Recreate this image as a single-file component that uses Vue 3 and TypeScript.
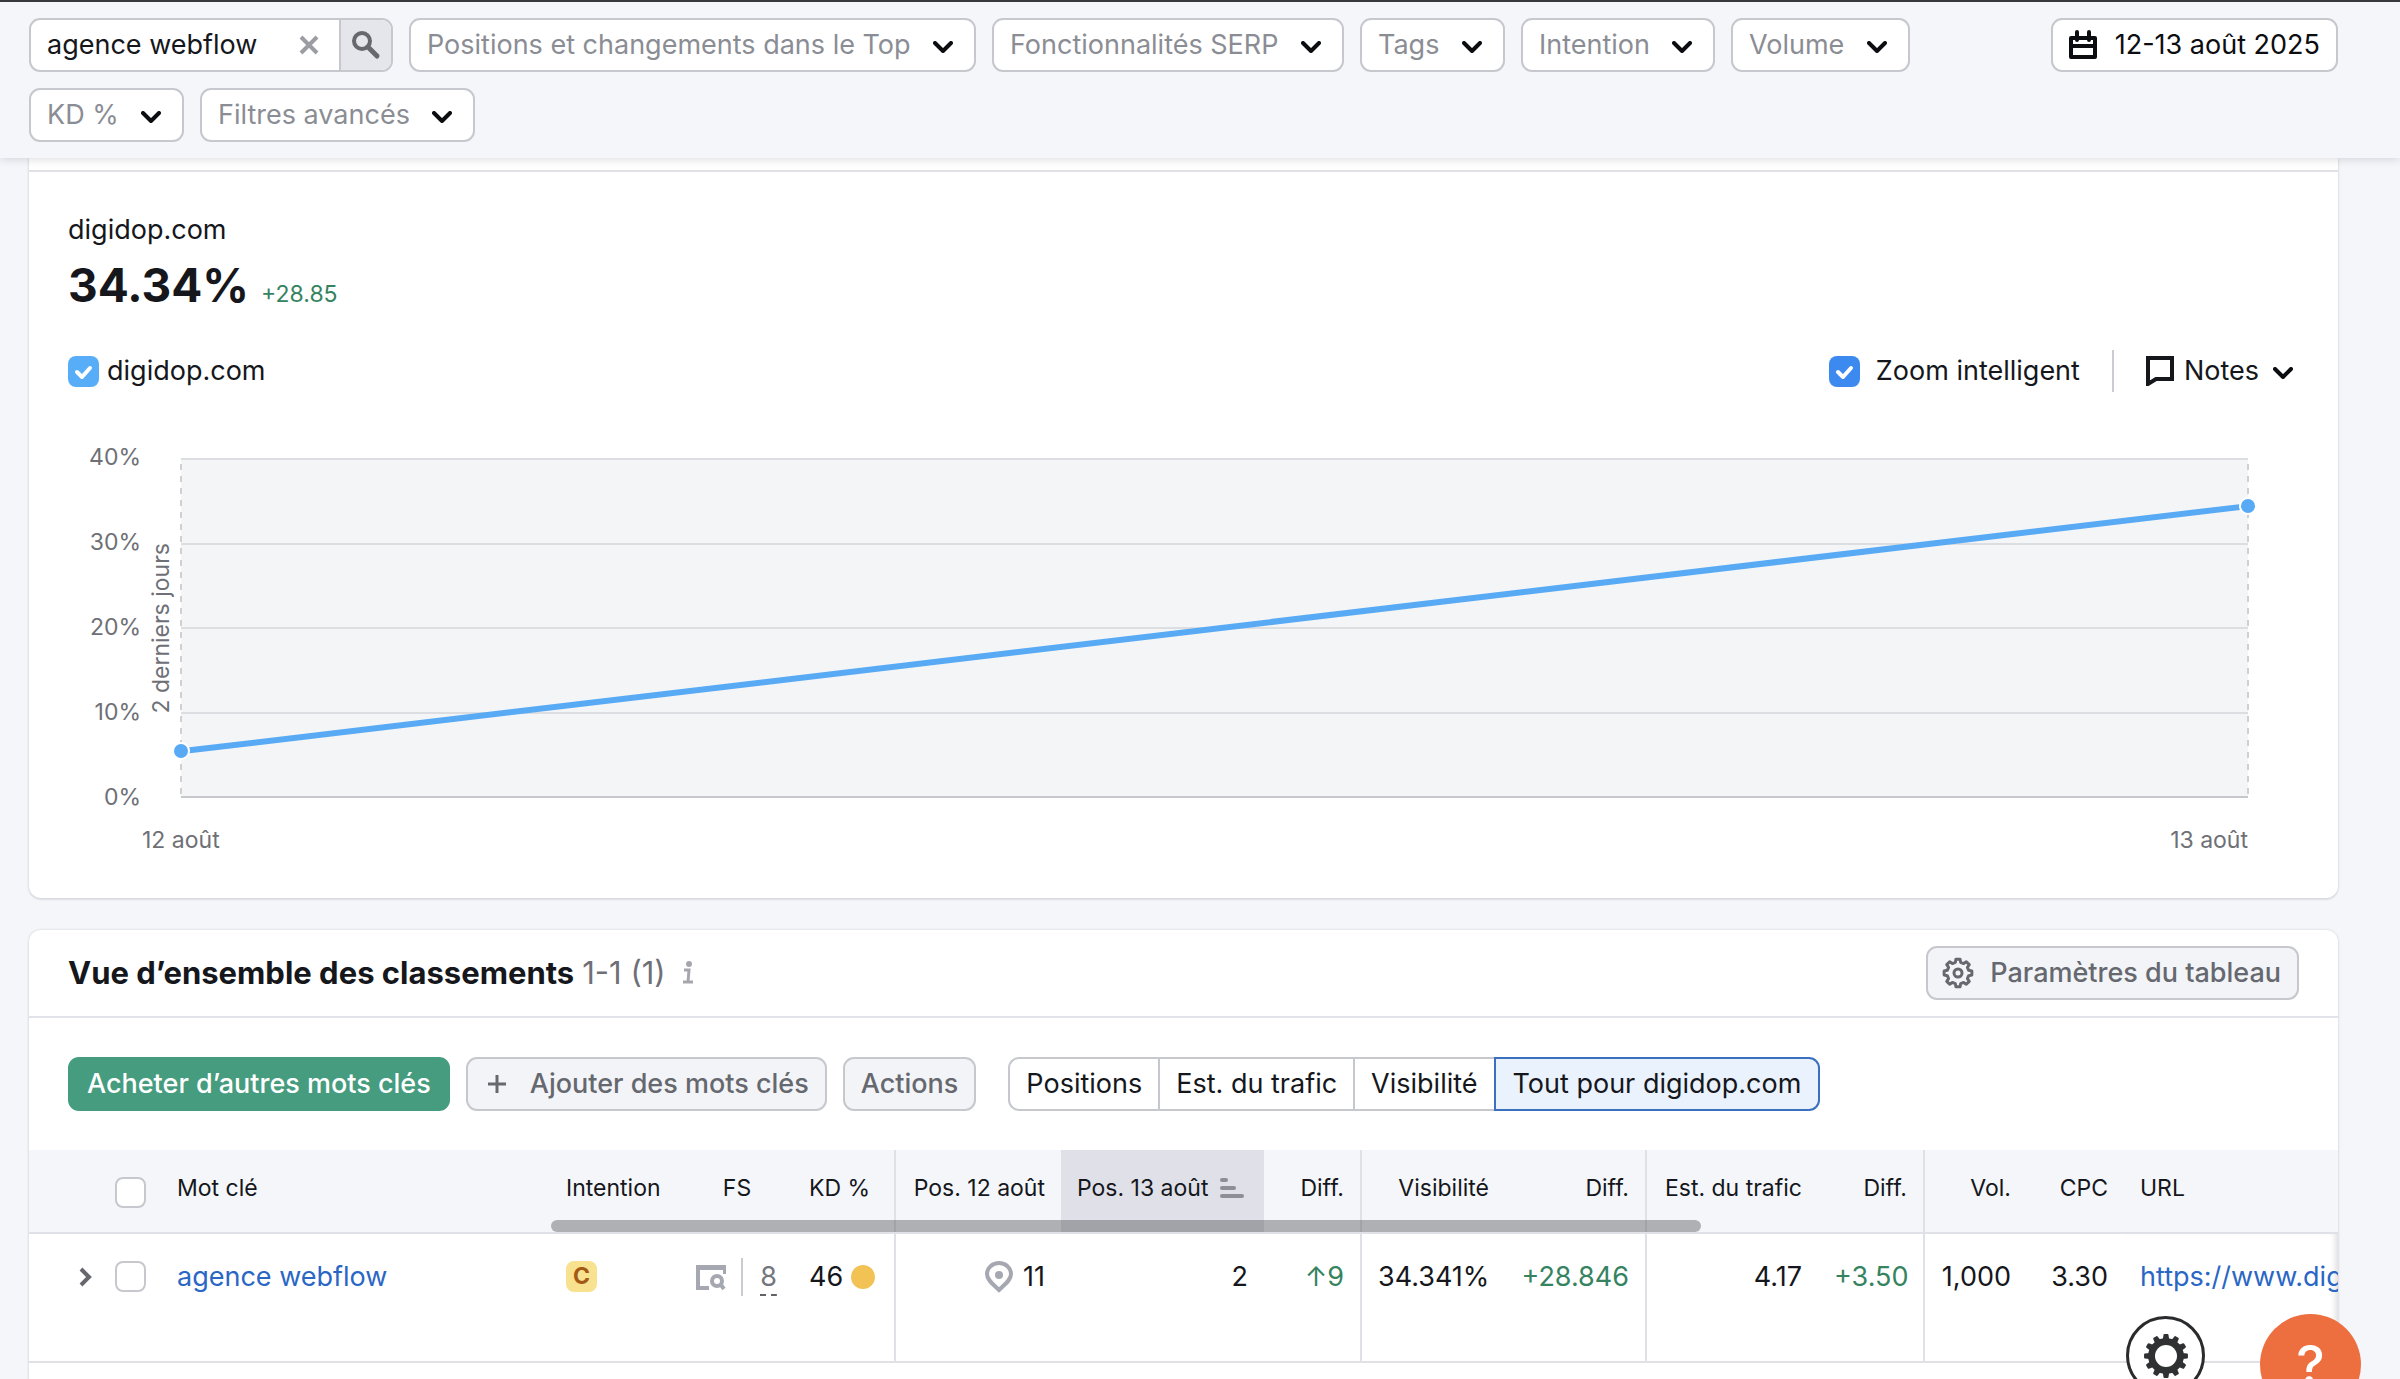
<script setup lang="ts">
import { ref } from 'vue'

interface Point {
  date: string
  value: number
}

interface Filter {
  id: string
  label: string
}

const query = ref('agence webflow')
const view = ref('Tout pour digidop.com')

const primaryFilters: Filter[] = [
  { id: 'top', label: 'Positions et changements dans le Top' },
  { id: 'serp', label: 'Fonctionnalités SERP' },
  { id: 'tags', label: 'Tags' },
  { id: 'intent', label: 'Intention' },
  { id: 'volume', label: 'Volume' },
]
const secondaryFilters: Filter[] = [
  { id: 'kd', label: 'KD %' },
  { id: 'advanced', label: 'Filtres avancés' },
]
const views = ['Positions', 'Est. du trafic', 'Visibilité', 'Tout pour digidop.com']

const ticks = [40, 30, 20, 10, 0]
const points: Point[] = [
  { date: '12 août', value: 5.49 },
  { date: '13 août', value: 34.34 },
]
const fromTop = (value: number): number => 100 - (value / 40) * 100
const line = points.map((p, i) => `${i * 100},${fromTop(p.value)}`).join(' ')

// Outline of a cog: each tooth is two outer points followed by two inner ones.
function cog(teeth: number, outer: number, inner: number, tip: number, root: number): string {
  const step = (Math.PI * 2) / teeth
  const out: string[] = []
  for (let i = 0; i < teeth; i++) {
    const a = i * step - Math.PI / 2
    const corners: [number, number][] = [
      [outer, a - step * tip],
      [outer, a + step * tip],
      [inner, a + step * root],
      [inner, a + step * (1 - root)],
    ]
    for (const [r, t] of corners) {
      out.push(`${(r * Math.cos(t)).toFixed(2)} ${(r * Math.sin(t)).toFixed(2)}`)
    }
  }
  return `M${out.join('L')}Z`
}
const settingsCog = cog(8, 14, 11, 0.19, 0.31)
const floatingCog = cog(12, 21, 17, 0.14, 0.24)
</script>

<template>
  <div class="page">
    <header class="filters">
      <div class="filter-row">
        <form class="search" @submit.prevent>
          <input v-model="query" class="search-input" type="text" aria-label="Mot clé" />
          <button class="clear" type="button" aria-label="Effacer" @click="query = ''">
            <svg width="20" height="20" viewBox="0 0 20 20"><path d="M2 2L18 18M18 2L2 18" /></svg>
          </button>
          <button class="search-go" type="submit" aria-label="Rechercher">
            <svg width="30" height="30" viewBox="0 0 30 30">
              <circle cx="11" cy="11" r="8" />
              <path d="M17 17L26 26" />
            </svg>
          </button>
        </form>
        <span v-for="f in primaryFilters" :key="f.id" class="select">
          <select :aria-label="f.label"><option>{{ f.label }}</option></select>
          <svg class="chevron" width="20" height="12" viewBox="0 0 20 12"><path d="M2 2L10 10L18 2" /></svg>
        </span>
        <button class="control date" type="button">
          <svg width="28" height="30" viewBox="0 0 28 30">
            <path d="M2 8H26V27H2ZM2 16H26M8 2V10M20 2V10" />
          </svg>
          12-13 août 2025
        </button>
      </div>
      <div class="filter-row">
        <span v-for="f in secondaryFilters" :key="f.id" class="select">
          <select :aria-label="f.label"><option>{{ f.label }}</option></select>
          <svg class="chevron" width="20" height="12" viewBox="0 0 20 12"><path d="M2 2L10 10L18 2" /></svg>
        </span>
      </div>
    </header>

    <main class="content">
      <section class="card visibility">
        <div class="tab-edge"></div>
        <div class="visibility-body">
          <div class="domain">digidop.com</div>
          <div class="score">
            <strong>34.34%</strong>
            <span class="delta">+28.85</span>
          </div>
          <div class="chart-controls">
            <label class="legend"><input class="box light" type="checkbox" checked />digidop.com</label>
            <label class="zoom"><input class="box" type="checkbox" checked />Zoom intelligent</label>
            <button class="notes" type="button">
              <svg width="28" height="30" viewBox="0 0 28 30"><path d="M2 2H26V23H10L2 28Z" /></svg>
              <span>Notes</span>
              <svg class="chevron-inline" width="20" height="12" viewBox="0 0 20 12"><path d="M2 2L10 10L18 2" /></svg>
            </button>
          </div>
          <div class="chart">
            <div class="y-axis"><span v-for="t in ticks" :key="t">{{ t }}%</span></div>
            <div class="range"><span>2 derniers jours</span></div>
            <div class="plot">
              <div class="grid"><i v-for="n in 4" :key="n"></i></div>
              <svg class="series" viewBox="0 0 100 100" preserveAspectRatio="none">
                <polyline :points="line" />
              </svg>
              <span
                v-for="(p, i) in points"
                :key="p.date"
                class="dot"
                :style="{ left: i * 100 + '%', top: fromTop(p.value) + '%' }"
              ></span>
            </div>
          </div>
          <div class="x-axis"><span v-for="p in points" :key="p.date">{{ p.date }}</span></div>
        </div>
      </section>

      <section class="card rankings">
        <div class="rankings-head">
          <h2>Vue d’ensemble des classements</h2>
          <span class="range-count">1-1 (1)</span>
          <svg class="info" width="12" height="24" viewBox="0 0 12 24">
            <circle cx="7" cy="3" r="2" />
            <path d="M2 9H7L6 21M1 21H11" />
          </svg>
          <button class="control gray settings" type="button">
            <svg width="32" height="32" viewBox="-16 -16 32 32">
              <path :d="settingsCog" />
              <circle r="4" />
            </svg>
            Paramètres du tableau
          </button>
        </div>

        <div class="toolbar">
          <button class="control buy" type="button">Acheter d’autres mots clés</button>
          <button class="control gray add" type="button">
            <svg width="20" height="20" viewBox="0 0 20 20"><path d="M10 1V19M1 10H19" /></svg>
            Ajouter des mots clés
          </button>
          <button class="control gray" type="button">Actions</button>
          <div class="segments">
            <button
              v-for="v in views"
              :key="v"
              type="button"
              :class="{ active: v === view }"
              @click="view = v"
            >{{ v }}</button>
          </div>
        </div>

        <div class="table-wrap">
          <table>
            <colgroup>
              <col class="w-expand" /><col class="w-check" /><col class="w-key" /><col class="w-intent" />
              <col class="w-fs" /><col class="w-kd" /><col class="w-pos" /><col class="w-pos-sorted" />
              <col class="w-diff" /><col class="w-vis" /><col class="w-vis-diff" /><col class="w-traffic" />
              <col class="w-traffic-diff" /><col class="w-vol" /><col class="w-cpc" /><col />
            </colgroup>
            <thead>
              <tr>
                <th></th>
                <th class="check"><input class="box" type="checkbox" aria-label="Tout sélectionner" /></th>
                <th>Mot clé</th>
                <th>Intention</th>
                <th class="mid">FS</th>
                <th class="edge">KD %</th>
                <th class="num">Pos. 12 août</th>
                <th class="sorted">
                  Pos. 13 août
                  <svg width="24" height="22" viewBox="0 0 24 22"><path d="M2 3H6M2 11H14M2 19H22" /></svg>
                </th>
                <th class="num edge">Diff.</th>
                <th class="num">Visibilité</th>
                <th class="num edge">Diff.</th>
                <th class="num">Est. du trafic</th>
                <th class="num edge">Diff.</th>
                <th class="num">Vol.</th>
                <th class="num">CPC</th>
                <th>URL</th>
              </tr>
            </thead>
            <tbody>
              <tr>
                <td class="expand">
                  <button type="button" aria-label="Développer">
                    <svg width="13" height="20" viewBox="0 0 13 20"><path d="M2 2L10 10L2 18" /></svg>
                  </button>
                </td>
                <td class="check"><input class="box" type="checkbox" aria-label="agence webflow" /></td>
                <td><a href="#">agence webflow</a></td>
                <td><span class="intent">C</span></td>
                <td>
                  <div class="features">
                    <svg width="30" height="26" viewBox="0 0 30 26">
                      <path class="bar" d="M0 1H30V10H27V6H0Z" />
                      <path d="M2 4V24H13M25 21L28 25" />
                      <circle cx="21" cy="17" r="5" />
                    </svg>
                    <span class="feature-count"><span>8</span></span>
                  </div>
                </td>
                <td class="edge"><div class="difficulty">46<i></i></div></td>
                <td>
                  <div class="local">
                    <svg width="28" height="32" viewBox="0 0 28 32">
                      <path d="M14 29C8 23 2 19 2 13A12 11 0 0 1 26 13C26 19 20 23 14 29Z" />
                      <circle cx="14" cy="14" r="4" />
                    </svg>
                    11
                  </div>
                </td>
                <td class="num">2</td>
                <td class="num edge up">↑9</td>
                <td class="num">34.341%</td>
                <td class="num edge up">+28.846</td>
                <td class="num">4.17</td>
                <td class="num edge up">+3.50</td>
                <td class="num">1,000</td>
                <td class="num">3.30</td>
                <td class="url"><a href="#">https://www.digidop.com</a></td>
              </tr>
            </tbody>
          </table>
          <div class="scrollbar"></div>
        </div>
      </section>
    </main>

    <div class="floating">
      <button class="float-settings" type="button" aria-label="Préférences">
        <svg width="46" height="46" viewBox="-23 -23 46 46">
          <path :d="floatingCog" />
          <circle r="11" />
        </svg>
      </button>
      <button class="float-help" type="button">?</button>
    </div>
  </div>
</template>

<style>
body {
  background: #f4f5fa;
}
</style>

<style scoped>
.page {
  position: relative;
  display: flex;
  flex-direction: column;
  height: 100vh;
  overflow: hidden;
  box-sizing: border-box;
  background: #f4f6fa;
  color: #15171c;
  font-family: Inter, 'Liberation Sans', sans-serif;
  font-size: 27px;
  line-height: 32px;
}
.page *,
.page *::before {
  box-sizing: border-box;
}
button,
input,
select {
  margin: 0;
  font: inherit;
  color: inherit;
}
button {
  cursor: pointer;
}
svg {
  flex: none;
  fill: none;
  stroke: currentColor;
  stroke-width: 4;
}
a {
  color: #2a67c5;
  text-decoration: none;
}

/* filter bar */
.filters {
  position: relative;
  z-index: 2;
  display: flex;
  flex-direction: column;
  gap: 16px;
  padding: 16px 62px 16px 29px;
  border-top: 2px solid #38393d;
  background: #f4f6fa;
  box-shadow: 0 2px 8px rgba(25, 27, 35, 0.13);
}
.filter-row {
  display: flex;
  gap: 16px;
}
.search,
.select select,
.control {
  height: 54px;
  border: 2px solid #c6c8cd;
  border-radius: 11px;
  background: #fff;
}
.search {
  display: flex;
  width: 364px;
  overflow: hidden;
}
.search-input {
  flex: 1;
  min-width: 0;
  padding: 0 0 0 16px;
  border: 0;
  outline: 0;
  background: none;
}
.clear,
.search-go {
  display: flex;
  align-items: center;
  justify-content: center;
  padding: 0;
  border: 0;
  background: none;
}
.clear {
  width: 60px;
  color: #9b9da3;
}
.search-go {
  width: 52px;
  border-left: 2px solid #c6c8cd;
  background: #e5e6eb;
  color: #66686e;
}
.search-go path {
  stroke-width: 5;
  stroke-linecap: round;
}
.select {
  position: relative;
  display: flex;
}
.select select {
  appearance: none;
  padding: 0 63px 0 16px;
  color: #8b8d94;
  outline: 0;
}
.chevron {
  position: absolute;
  right: 23px;
  top: 23px;
  pointer-events: none;
}
.chevron,
.chevron-inline {
  color: #0c0d10;
  stroke-linecap: round;
  stroke-linejoin: round;
}
.control {
  display: flex;
  align-items: center;
  padding: 0 16px;
  white-space: nowrap;
}
.date {
  gap: 18px;
  margin-left: auto;
  color: #0c0d10;
}
.date svg {
  stroke-linejoin: round;
  stroke-linecap: round;
}

/* cards */
.content {
  display: flex;
  flex: 1;
  flex-direction: column;
  gap: 32px;
  min-height: 0;
  padding: 0 62px 0 29px;
}
.card {
  background: #fff;
  box-shadow: 0 0 2px 1px rgba(25, 27, 35, 0.08), 0 2px 2px rgba(25, 27, 35, 0.08);
}
.visibility {
  flex: none;
  border-radius: 0 0 12px 12px;
}
.tab-edge {
  height: 14px;
  border-bottom: 2px solid #dfe1e5;
}
.visibility-body {
  padding: 42px 39px 44px;
}
.score {
  display: flex;
  align-items: baseline;
  gap: 12px;
  height: 56px;
  margin-top: 11px;
  line-height: 56px;
}
.score strong {
  font-size: 46px;
  font-weight: 700;
}
.delta {
  color: #35835f;
  font-size: 23px;
}
.chart-controls {
  display: flex;
  align-items: center;
  height: 42px;
  margin-top: 37px;
}
.legend,
.zoom {
  display: flex;
  align-items: center;
}
.legend {
  gap: 8px;
}
.zoom {
  gap: 16px;
  margin-left: auto;
}
.box {
  flex: none;
  width: 31px;
  height: 31px;
  appearance: none;
  border: 2px solid #c6c8cd;
  border-radius: 8px;
  background: #fff;
}
.box:checked {
  border: 0;
  background: #3c8af0 url("data:image/svg+xml,%3Csvg xmlns='http://www.w3.org/2000/svg' viewBox='0 0 31 31'%3E%3Cpath d='M9 16l5 5 8-9' fill='none' stroke='white' stroke-width='4' stroke-linecap='round' stroke-linejoin='round'/%3E%3C/svg%3E");
}
.box.light:checked {
  background-color: #57adf8;
}
.notes {
  display: flex;
  align-items: center;
  height: 42px;
  margin-left: 32px;
  padding: 0 6px 0 32px;
  border: 0;
  border-left: 2px solid #cbccd1;
  background: none;
}
.notes span {
  margin: 0 14px 0 10px;
}
.notes .chevron-inline {
  margin-top: 4px;
}

/* chart */
.chart {
  display: grid;
  grid-template-columns: 73px 40px 1fr;
  height: 340px;
  margin: 66px 51px 0 0;
  color: #6e7076;
  font-size: 23px;
  line-height: 28px;
}
.y-axis {
  display: flex;
  flex-direction: column;
  justify-content: space-between;
  margin: -15px 0 -13px;
  text-align: right;
}
.range {
  display: flex;
  align-items: center;
  justify-content: center;
}
.range span {
  writing-mode: vertical-rl;
  transform: rotate(180deg);
  white-space: nowrap;
}
.plot {
  position: relative;
  background: #f3f5f7;
}
.plot::before {
  content: '';
  position: absolute;
  inset: 0 -1px 0 -1px;
  background:
    repeating-linear-gradient(transparent 0 6px, #cfd0d4 6px 12px) left / 2px 100% no-repeat,
    repeating-linear-gradient(transparent 0 6px, #cfd0d4 6px 12px) right / 2px 100% no-repeat;
}
.grid {
  display: grid;
  grid-template-rows: repeat(4, 1fr);
  height: 100%;
  border-bottom: 2px solid #c6c8cc;
}
.grid i {
  border-top: 2px solid #dcdee1;
}
.series {
  position: absolute;
  inset: 0;
  width: 100%;
  height: 100%;
  overflow: visible;
}
.series polyline {
  stroke: #58aaf5;
  stroke-width: 6;
  vector-effect: non-scaling-stroke;
}
.dot {
  position: absolute;
  width: 18px;
  height: 18px;
  margin: -9px;
  border: 2px solid #fff;
  border-radius: 50%;
  background: #58aaf5;
}
.x-axis {
  display: flex;
  justify-content: space-between;
  margin: 28px 51px 0 74px;
  color: #6e7076;
  font-size: 23px;
  line-height: 28px;
}

/* rankings */
.rankings {
  display: flex;
  flex: 1;
  flex-direction: column;
  min-height: 0;
  border-radius: 12px 12px 0 0;
}
.rankings-head {
  display: flex;
  align-items: center;
  padding: 16px 39px;
  border-bottom: 2px solid #e2e3e8;
}
h2 {
  margin: 0;
  font-size: 31px;
  font-weight: 700;
}
.range-count {
  margin-left: 8px;
  color: #6e7076;
  font-size: 31px;
}
.info {
  margin-left: 16px;
  color: #a5a7ad;
  stroke-width: 3;
}
.info circle {
  fill: currentColor;
  stroke-width: 2;
}
.gray {
  background: #f3f4f7;
  color: #66686f;
  font-weight: 500;
}
.settings {
  gap: 16px;
  margin-left: auto;
  padding-left: 14px;
}
.settings svg {
  stroke-width: 3;
  stroke-linejoin: round;
}
.toolbar {
  display: flex;
  gap: 16px;
  padding: 39px;
}
.buy {
  border: 0;
  padding: 0 19px;
  background: #469c7f;
  color: #fff;
  font-weight: 500;
}
.add {
  gap: 23px;
  padding-left: 19px;
}
.add svg {
  stroke-width: 3;
}
.segments {
  display: flex;
  margin-left: 16px;
}
.segments button {
  height: 54px;
  padding: 0 16px;
  border: 2px solid #c6c8cd;
  border-right-width: 0;
  background: #fff;
  white-space: nowrap;
}
.segments button:first-child {
  border-radius: 11px 0 0 11px;
}
.segments button:last-child {
  border-right-width: 2px;
  border-radius: 0 11px 11px 0;
}
.segments .active {
  padding: 0 17px;
  border-color: #3a70be;
  background: #eaf2fd;
}

/* table */
.table-wrap {
  position: relative;
  overflow: hidden;
}
table {
  width: 100%;
  table-layout: fixed;
  border-collapse: separate;
  border-spacing: 0;
}
.w-expand { width: 74px; }
.w-check { width: 58px; }
.w-key { width: 389px; }
.w-intent { width: 131px; }
.w-fs { width: 112px; }
.w-kd { width: 103px; }
.w-pos { width: 165px; }
.w-pos-sorted { width: 203px; }
.w-diff { width: 98px; }
.w-vis { width: 143px; }
.w-vis-diff { width: 142px; }
.w-traffic { width: 171px; }
.w-traffic-diff { width: 107px; }
.w-vol { width: 102px; }
.w-cpc { width: 97px; }
th,
td {
  padding: 27px 16px 0;
  border-bottom: 2px solid #e0e1e6;
  text-align: left;
  vertical-align: top;
  white-space: nowrap;
}
th {
  height: 84px;
  padding-top: 24px;
  background: #f4f6fa;
  font-size: 23px;
  font-weight: 400;
  line-height: 28px;
}
td {
  height: 129px;
}
.edge {
  border-right: 2px solid #e0e1e6;
}
.num {
  text-align: right;
}
.mid {
  text-align: center;
}
.sorted {
  background: #e0e1e8;
}
.sorted svg {
  margin-left: 5px;
  vertical-align: -3px;
  color: #8d8f96;
  stroke-linecap: round;
}
.check {
  padding-left: 12px;
  padding-right: 0;
}
th.check {
  padding-top: 27px;
}
.check .box {
  display: block;
}
.expand {
  padding-right: 0;
  padding-left: 50px;
}
.expand button {
  display: flex;
  align-items: center;
  height: 32px;
  padding: 0;
  border: 0;
  background: none;
  color: #66686e;
}
.intent {
  display: block;
  width: 31px;
  height: 31px;
  border-radius: 8px;
  background: #f8e18f;
  color: #a35a14;
  font-size: 23px;
  font-weight: 700;
  line-height: 31px;
  text-align: center;
}
.features,
.difficulty,
.local {
  display: flex;
  align-items: center;
}
.features {
  justify-content: flex-end;
  color: #a5a8b0;
}
.features .bar {
  fill: currentColor;
  stroke: none;
}
.feature-count {
  height: 38px;
  margin: -3px 0 -3px 15px;
  padding: 3px 0 3px 17px;
  border-left: 2px solid #cbccd1;
  color: #74767c;
}
.feature-count span {
  display: block;
  height: 35px;
  background: linear-gradient(90deg, #606268 6px, transparent 6px 11px, #606268 11px) bottom / 100% 2px no-repeat;
}
.difficulty {
  gap: 8px;
}
.difficulty i {
  width: 24px;
  height: 24px;
  border-radius: 50%;
  background: #f3c255;
}
.local {
  justify-content: flex-end;
  gap: 10px;
}
.local svg {
  color: #a5a8b0;
}
.local circle {
  fill: currentColor;
  stroke: none;
}
.up {
  color: #35835f;
}
.url {
  overflow: hidden;
  padding-right: 0;
  box-shadow: inset -6px 0 6px -4px rgba(25, 27, 35, 0.16);
}
.scrollbar {
  position: absolute;
  top: 70px;
  left: 522px;
  right: 637px;
  height: 12px;
  border-radius: 6px;
  background: rgba(60, 62, 66, 0.38);
}

/* floating actions */
.floating {
  position: absolute;
  z-index: 3;
  right: 39px;
  bottom: -36px;
  display: flex;
  align-items: flex-start;
  gap: 55px;
}
.floating button {
  display: flex;
  align-items: center;
  justify-content: center;
  padding: 0;
  border-radius: 50%;
}
.float-settings {
  width: 79px;
  height: 79px;
  margin-top: 2px;
  border: 3px solid #2a2b2d;
  background: #fff;
  color: #303133;
}
.float-settings path {
  fill: currentColor;
  stroke-width: 2;
  stroke-linejoin: round;
}
.float-settings circle {
  fill: #fff;
  stroke: none;
}
.float-help {
  width: 101px;
  height: 101px;
  border: 0;
  background: #ed6e3f;
  color: #fff;
  font-size: 54px;
  font-weight: 500;
}
</style>
